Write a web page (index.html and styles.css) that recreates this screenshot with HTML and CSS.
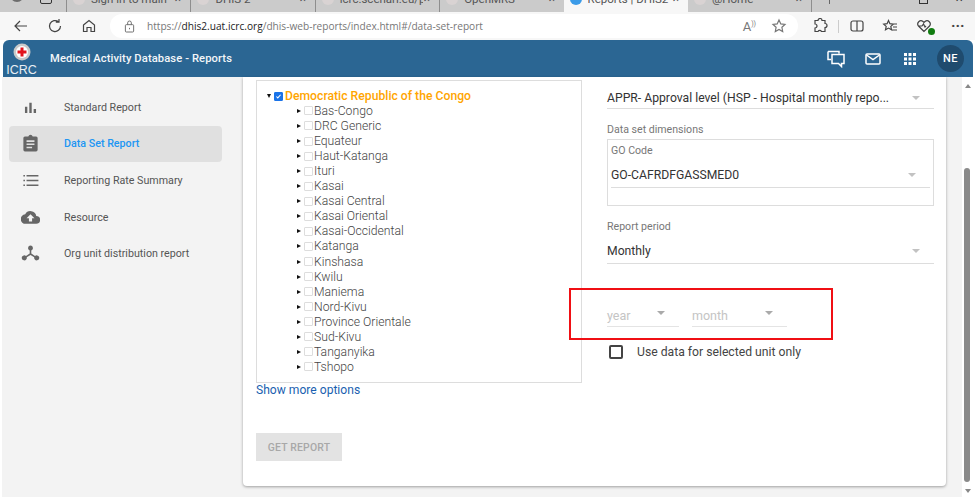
FILE: index.html
```html
<!DOCTYPE html>
<html lang="en">
<head>
  <meta charset="UTF-8">
  <title>Reports | DHIS2</title>
  <link rel="stylesheet" href="styles.css">
</head>
<body>

  <div class="tabstrip">
    <div class="profile"><span class="profile-dot"></span><span class="tabs-btn"></span></div>
    <div class="tab"><span class="fav"></span><span class="tab-name">Sign in to main</span><span class="tab-x">✕</span></div>
    <div class="tab"><span class="fav"></span><span class="tab-name">DHIS 2</span><span class="tab-x">✕</span></div>
    <div class="tab"><span class="fav"></span><span class="tab-name">icrc.scenari.eu/pub</span><span class="tab-x">✕</span></div>
    <div class="tab"><span class="fav"></span><span class="tab-name">OpenMRS</span><span class="tab-x">✕</span></div>
    <div class="tab tab-on"><span class="fav fav-blue"></span><span class="tab-name">Reports | DHIS2</span><span class="tab-x">✕</span></div>
    <div class="tab tab-after"><span class="fav"></span><span class="tab-name">@Home</span><span class="tab-x">✕</span></div>
    <span class="new-tab"></span>
    <span class="win-restore"></span>
    <span class="win-close">✕</span>
  </div>

  <div class="toolbar">
    <svg class="tb-icon back" viewBox="0 0 16 16"><path d="M14 8H2M7 3 2 8l5 5"/></svg>
    <svg class="tb-icon reload" viewBox="0 0 16 16"><path d="M13.5 8A5.5 5.5 0 1 1 11.5 3.8M12 1v3.2H8.8"/></svg>
    <svg class="tb-icon home" viewBox="0 0 16 16"><path d="M2.5 7 8 2.5 13.500 7v6.500H10V9.500H6v4H2.500z"/></svg>
    <div class="addressbar">
      <svg class="lock" viewBox="0 0 12 14"><rect x="1.500" y="5" width="9" height="8" rx="1"/><path d="M4 5V3a2 2 0 0 1 4 0v2M6 8.500v1.500"/></svg>
      <span class="url">https://<b>dhis2.uat.icrc.org</b>/dhis-web-reports/index.html#/data-set-report</span>
      <span class="read">A<small>))</small></span>
      <svg class="tb-icon star" viewBox="0 0 16 16"><path d="M8 2l1.800 3.900 4.200.5-3.100 2.900.8 4.200L8 11.400l-3.700 2.100.8-4.200L2 6.400l4.200-.5z"/></svg>
    </div>
    <svg class="tb-icon puzzle" viewBox="0 0 16 16"><path d="M6 2.500a2 2 0 0 1 4 0h3v3a2 2 0 0 1 0 4v4H9.500a2 2 0 0 0-3.500 0H3V10a2 2 0 0 0 0-4V2.500z"/></svg>
    <span class="tb-sep"></span>
    <svg class="tb-icon split" viewBox="0 0 16 16"><rect x="2" y="3" width="12" height="10" rx="2"/><path d="M8 3v10"/></svg>
    <svg class="tb-icon favs" viewBox="0 0 16 16"><path d="M6.500 2.500l1.400 3.200 3.400.4-2.500 2.300.7 3.400-3-1.700-3 1.700.7-3.400L1.700 6.100l3.400-.4zM11 6h4M11 9h4M10 12h5"/></svg>
    <span class="health">
      <svg class="tb-icon" viewBox="0 0 16 16"><path d="M8 13.500 2.500 8A3.200 3.200 0 0 1 7 3.500l1 1 1-1A3.200 3.200 0 0 1 13.500 8zM3 8h3l1.500-2L9 9l1-1"/></svg>
      <span class="health-ok"></span>
    </span>
    <span class="dots">···</span>
  </div>

  <header class="appbar">
    <div class="logo">
      <svg class="emblem" viewBox="0 0 18 18"><circle cx="9" cy="9" r="8.500" fill="#c9c9c9"/><circle cx="9" cy="9" r="6" fill="#fff"/><path d="M7.500 4.500h3v3h3v3h-3v3h-3v-3h-3v-3h3z" fill="#e1141c"/></svg>
      <span class="logo-name">ICRC</span>
    </div>
    <div class="app-title">Medical Activity Database - Reports</div>
    <div class="app-icons">
      <svg class="app-icon" viewBox="0 0 18 18"><path d="M1 1.500h11v2M5 4.500h12v9h-2.500v3l-3-3H5z"/><path d="M1 1.500v8h3"/></svg>
      <svg class="app-icon mail" viewBox="0 0 18 18"><rect x="2" y="4" width="14" height="10" rx="1"/><path d="M2.500 5 9 9.500 15.500 5"/></svg>
      <svg class="grid" viewBox="0 0 14 14"><path d="M1 1h3v3H1zM5.500 1h3v3h-3zM10 1h3v3h-3zM1 5.500h3v3H1zM5.500 5.500h3v3h-3zM10 5.500h3v3h-3zM1 10h3v3H1zM5.500 10h3v3h-3zM10 10h3v3h-3z"/></svg>
      <span class="avatar">NE</span>
    </div>
  </header>

  <div class="workspace">
    <nav class="sidebar">
      <a class="nav-item">
        <svg class="nav-icon" viewBox="0 0 24 24"><path d="M5 11h3v8H5zM10.500 6h3v13h-3zM16 14h3v5h-3z"/></svg>
        <span>Standard Report</span>
      </a>
      <a class="nav-item nav-on">
        <svg class="nav-icon" viewBox="0 0 24 24"><path fill-rule="evenodd" d="M19 3h-4.200a3 3 0 0 0-5.600 0H5a2 2 0 0 0-2 2v15a2 2 0 0 0 2 2h14a2 2 0 0 0 2-2V5a2 2 0 0 0-2-2zM7 8h10v2H7zm0 4h10v2H7zm0 4h7v2H7z"/></svg>
        <span>Data Set Report</span>
      </a>
      <a class="nav-item">
        <svg class="nav-icon" viewBox="0 0 24 24"><path d="M3 5h2v2H3zM7 5h15v2H7zM3 11h2v2H3zM7 11h15v2H7zM3 17h2v2H3zM7 17h15v2H7z"/></svg>
        <span>Reporting Rate Summary</span>
      </a>
      <a class="nav-item">
        <svg class="nav-icon" viewBox="0 0 24 24"><path fill-rule="evenodd" d="M19.300 10A7.500 7.500 0 0 0 5.300 8 6 6 0 0 0 6 20h13a5 5 0 0 0 .3-10zM14 13v4h-4v-4H7l5-5 5 5z"/></svg>
        <span>Resource</span>
      </a>
      <a class="nav-item">
        <svg class="nav-icon" viewBox="0 0 24 24"><path d="M12 2a3.200 3.200 0 0 1 1 6.200V12l4.700 3.100a3.200 3.200 0 1 1-1 1.700L12 13.800l-4.700 3a3.200 3.200 0 1 1-1-1.700L11 12V8.200A3.200 3.200 0 0 1 12 2z"/></svg>
        <span>Org unit distribution report</span>
      </a>
    </nav>

    <main class="card">
      <div class="left-col">
        <div class="tree" id="tree"></div>
        <a class="more">Show more options</a>
        <button class="get-report">GET REPORT</button>
      </div>

      <div class="right-col">
        <div class="select select-first">
          <span>APPR- Approval level (HSP - Hospital monthly repo...</span>
          <i class="caret"></i>
        </div>
        <div class="small-label dims-label">Data set dimensions</div>
        <div class="dims">
          <div class="small-label">GO Code</div>
          <div class="select select-go">
            <span>GO-CAFRDFGASSMED0</span>
            <i class="caret"></i>
          </div>
        </div>
        <div class="small-label period-label">Report period</div>
        <div class="select select-period">
          <span>Monthly</span>
          <i class="caret"></i>
        </div>
        <div class="period-row">
          <div class="select-off year"><span>year</span><i class="caret"></i></div>
          <div class="select-off month"><span>month</span><i class="caret"></i></div>
        </div>
        <label class="only-unit"><span class="box"></span>Use data for selected unit only</label>
      </div>
      <div class="red-box"></div>
    </main>

    <div class="scrollbar">
      <i class="sb-up"></i>
      <div class="sb-thumb"></div>
      <i class="sb-down"></i>
    </div>
  </div>

  <script>
    // provinces of the org unit tree
    const provincias = ["Bas-Congo", "DRC Generic", "Equateur", "Haut-Katanga", "Ituri", "Kasai", "Kasai Central", "Kasai Oriental", "Kasai-Occidental", "Katanga", "Kinshasa", "Kwilu", "Maniema", "Nord-Kivu", "Province Orientale", "Sud-Kivu", "Tanganyika", "Tshopo"];

    let html = `<div class="root-row"><i class="tri-down"></i><span class="check-on"><svg viewBox="0 0 10 10"><path d="M2 5l2 2 4-4.500"/></svg></span><span class="root-name">Democratic Republic of the Congo</span></div>`;
    provincias.forEach(p => {
      html += `<div class="tree-row"><i class="tri-right"></i><span class="check"></span><span>${p}</span></div>`;
    });
    document.getElementById('tree').innerHTML = html;
  </script>

</body>
</html>
```

FILE: styles.css
```css
* {
  box-sizing: border-box;
}
html, body {
  margin: 0;
  height: 497px;
  overflow: hidden;
}
body {
  font-family: Roboto, "Liberation Sans", sans-serif;
  background: #fff;
  color: #333;
}

/* browser chrome */
.tabstrip {
  height: 12px;
  background: #cbcbcb;
  display: flex;
  align-items: flex-end;
  overflow: hidden;
  padding-left: 66px;
  position: relative;
}
.profile {
  position: absolute;
  left: 10px;
  bottom: 0;
  display: flex;
  gap: 16px;
}
.profile-dot {
  width: 14px;
  height: 14px;
  margin-bottom: 6px;
  border-radius: 50%;
  background: #6d6d6d;
}
.tabs-btn {
  width: 12px;
  height: 16px;
  margin-bottom: 8px;
  border: 1px solid #333;
  border-radius: 2px;
}
.tab {
  width: 124.4px;
  height: 26px;
  flex: none;
  display: flex;
  align-items: center;
  padding: 0 8px 0 6px;
  font-size: 11.5px;
  color: #555;
  border-left: 1px solid #8e8e8e;
}
.tab-on {
  background: #f7f7f7;
  border-left: 0;
  border-radius: 6px 6px 0 0;
}
.tab-after {
  border-left: 0;
  border-right: 1px solid #8e8e8e;
}
.fav {
  width: 12px;
  height: 12px;
  margin-right: 6px;
  border-radius: 50%;
  background: #d9d3d3;
  flex: none;
}
.fav-blue {
  background: #3b9be8;
}
.tab-name {
  flex: 1;
  white-space: nowrap;
  overflow: hidden;
}
.tab-x {
  font-size: 9px;
  color: #444;
}
.new-tab {
  width: 1px;
  height: 18px;
  margin: 0 0 8px 17px;
  background: #666;
  flex: none;
}
.win-restore {
  width: 9px;
  height: 12px;
  margin: 0 0 8px 89px;
  border: 1px solid #333;
  flex: none;
}
.win-close {
  margin: 0 0 7px 27px;
  font-size: 10px;
  line-height: 12px;
  color: #333;
  flex: none;
}
.toolbar {
  height: 28px;
  background: #f7f7f7;
  display: flex;
  align-items: center;
  padding-left: 13px;
}
.tb-icon {
  width: 16px;
  height: 16px;
  flex: none;
  fill: none;
  stroke: #444;
  stroke-width: 1.2;
}
.reload {
  margin-left: 18px;
}
.home {
  margin-left: 18px;
}
.addressbar {
  width: 688px;
  flex: none;
  height: 24px;
  margin-left: 13px;
  background: #fff;
  border-radius: 12px;
  display: flex;
  align-items: center;
  padding-left: 14px;
}
.lock {
  width: 11px;
  height: 13px;
  fill: none;
  stroke: #666;
  stroke-width: 1;
  flex: none;
}
.url {
  margin-left: 12px;
  font-family: "Open Sans", Roboto, sans-serif;
  font-size: 10.15px;
  color: #777;
  white-space: nowrap;
  flex: 1;
}
.url b {
  font-weight: 400;
  color: #222;
}
.read {
  font-size: 13px;
  color: #777;
  margin-right: 15px;
}
.read small {
  font-size: 7px;
  vertical-align: 5px;
}
.star {
  margin-right: 11px;
  stroke: #777;
}
.puzzle {
  margin-left: 14px;
}
.tb-sep {
  width: 1px;
  height: 13px;
  margin-left: 10px;
  background: #ccc;
}
.split {
  margin-left: 10px;
}
.favs {
  margin-left: 17px;
}
.health {
  margin-left: 18px;
  position: relative;
  display: flex;
}
.health-ok {
  position: absolute;
  right: -3px;
  bottom: -1px;
  width: 7px;
  height: 7px;
  border-radius: 50%;
  background: #107c10;
}
.dots {
  margin-left: 19px;
  font-size: 15px;
  font-weight: 700;
  color: #444;
}

/* app header */
.appbar {
  height: 37px;
  margin: 0 2px 0 3px;
  background: #2b6693;
  border-radius: 6px 6px 0 0;
  display: flex;
  align-items: center;
  color: #fff;
}
.logo {
  width: 37px;
  height: 37px;
  display: flex;
  flex-direction: column;
  align-items: center;
  flex: none;
  padding-top: 3px;
}
.emblem {
  width: 18px;
  height: 18px;
}
.logo-name {
  font-family: "Liberation Sans", sans-serif;
  font-size: 12.5px;
  line-height: 14px;
  margin-top: 2px;
  color: #e8eef3;
}
.app-title {
  margin-left: 10px;
  font-size: 11.2px;
  font-weight: 500;
  letter-spacing: 0.1px;
  color: #f3f6f9;
}
.app-icons {
  margin-left: auto;
  display: flex;
  align-items: center;
  padding-right: 9px;
}
.app-icon {
  width: 18px;
  height: 18px;
  fill: none;
  stroke: #fff;
  stroke-width: 1.5;
}
.mail {
  margin-left: 19px;
}
.grid {
  width: 14px;
  height: 14px;
  margin-left: 21px;
  fill: #fff;
}
.avatar {
  width: 27px;
  height: 27px;
  margin-left: 20px;
  border-radius: 50%;
  background: #1f4b6e;
  font-size: 11px;
  font-weight: 500;
  letter-spacing: 0.6px;
  line-height: 27px;
  text-align: center;
}

/* page under the header */
.workspace {
  height: 420px;
  display: flex;
  background: #f3f3f3;
  margin-left: 2px;
}
.sidebar {
  width: 241px;
  flex: none;
  padding: 12px 21px 0 7px;
}
.nav-item {
  height: 36.6px;
  display: flex;
  align-items: center;
  padding-left: 12px;
  border-radius: 4px;
  font-size: 10.7px;
  color: #555;
}
.nav-on {
  background: #e0e0e0;
  color: #2196f3;
  font-weight: 500;
}
.nav-icon {
  width: 19px;
  height: 19px;
  margin-right: 24px;
  fill: #666;
  flex: none;
}
.card {
  width: 703px;
  height: 409px;
  flex: none;
  background: #fff;
  border-radius: 0 0 4px 4px;
  box-shadow: 0 1px 3px rgba(0, 0, 0, 0.35);
  display: flex;
  padding: 3px 13px 0;
  position: relative;
}
.left-col {
  width: 326px;
  flex: none;
}
.tree {
  height: 303px;
  border: 1px solid #ddd;
  padding: 8px 0 0 10px;
  font-size: 12.2px;
  font-weight: 300;
  color: #444;
}
.root-row, .tree-row {
  height: 15.07px;
  display: flex;
  align-items: center;
  white-space: nowrap;
}
.root-row {
  height: 14.4px;
}
.tree-row {
  padding-left: 30px;
}
.root-name {
  margin-left: 1px;
  font-size: 12.2px;
  font-weight: 500;
  color: #ffa500;
}
.tri-down {
  width: 0;
  height: 0;
  margin-right: 3px;
  border-left: 2.5px solid transparent;
  border-right: 2.5px solid transparent;
  border-top: 4px solid #111;
}
.tri-right {
  width: 0;
  height: 0;
  margin-right: 3px;
  border-top: 2.5px solid transparent;
  border-bottom: 2.500px solid transparent;
  border-left: 4px solid #111;
}
.check, .check-on {
  width: 9px;
  height: 9px;
  flex: none;
  margin-right: 1px;
  border: 1px solid #ddd;
  border-radius: 1px;
}
.check-on {
  background: #1a73e8;
  border-color: #1a73e8;
  display: flex;
}
.check-on svg {
  fill: none;
  stroke: #fff;
  stroke-width: 1.5;
}
.more {
  display: block;
  margin-top: 1px;
  font-size: 12.1px;
  line-height: 13px;
  color: #1a5fb0;
}
.get-report {
  display: block;
  width: 86px;
  height: 28px;
  margin-top: 36px;
  border: 0;
  background: #e3e3e3;
  color: #a8a8a8;
  font-family: Roboto, sans-serif;
  font-size: 10.4px;
  font-weight: 500;
  letter-spacing: 0.2px;
}
.right-col {
  width: 327px;
  margin-left: 25px;
  flex: none;
}
.select {
  display: flex;
  align-items: center;
  justify-content: space-between;
  border-bottom: 1px solid #ddd;
  font-size: 12.2px;
  color: #333;
  padding-right: 14px;
}
.select-first {
  height: 29px;
  padding-top: 8px;
  padding-bottom: 0;
}
.small-label {
  font-size: 10.6px;
  color: #777;
}
.dims-label {
  margin-top: 14px;
  line-height: 13px;
}
.dims {
  height: 67px;
  margin-top: 3px;
  border: 1px solid #ddd;
  padding: 4px 3px 0;
}
.select-go {
  height: 28px;
  margin-top: 3px;
  padding-top: 3px;
  padding-right: 14px;
}
.period-label {
  margin-top: 14px;
  line-height: 13px;
}
.select-period {
  height: 31px;
  padding-top: 5px;
}
.caret {
  width: 0;
  height: 0;
  border-left: 4px solid transparent;
  border-right: 4px solid transparent;
  border-top: 4px solid #c2c2c2;
}
.period-row {
  display: flex;
  gap: 13px;
  margin-top: 41px;
}
.select-off {
  height: 22px;
  border-bottom: 1px solid #e4e4e4;
  font-size: 12.5px;
  color: #c4c4c4;
  display: flex;
  justify-content: space-between;
  padding: 3px 14px 0 0;
}
.select-off .caret {
  margin-top: 3px;
  border-top-color: #aaa;
}
.year {
  width: 72px;
}
.month {
  width: 95px;
}
.only-unit {
  display: flex;
  align-items: center;
  margin-top: 18px;
  padding-left: 2px;
  font-size: 12.2px;
  color: #444;
}
.box {
  width: 14px;
  height: 14px;
  margin-right: 14px;
  border: 2px solid #444;
  border-radius: 2px;
}
.red-box {
  position: absolute;
  left: 326px;
  top: 211px;
  width: 264px;
  height: 52px;
  border: 2px solid #f00f14;
}
.scrollbar {
  width: 13px;
  margin-left: 16px;
  background: #fff;
  position: relative;
}
.sb-up, .sb-down {
  position: absolute;
  left: 3px;
  width: 0;
  height: 0;
  border-left: 3.500px solid transparent;
  border-right: 3.500px solid transparent;
}
.sb-up {
  top: 7px;
  border-bottom: 4px solid #888;
}
.sb-down {
  bottom: 4px;
  border-top: 4px solid #888;
}
.sb-thumb {
  position: absolute;
  left: 2px;
  top: 91px;
  width: 6px;
  height: 314px;
  border-radius: 3px;
  background: #8a8a8a;
}
```
